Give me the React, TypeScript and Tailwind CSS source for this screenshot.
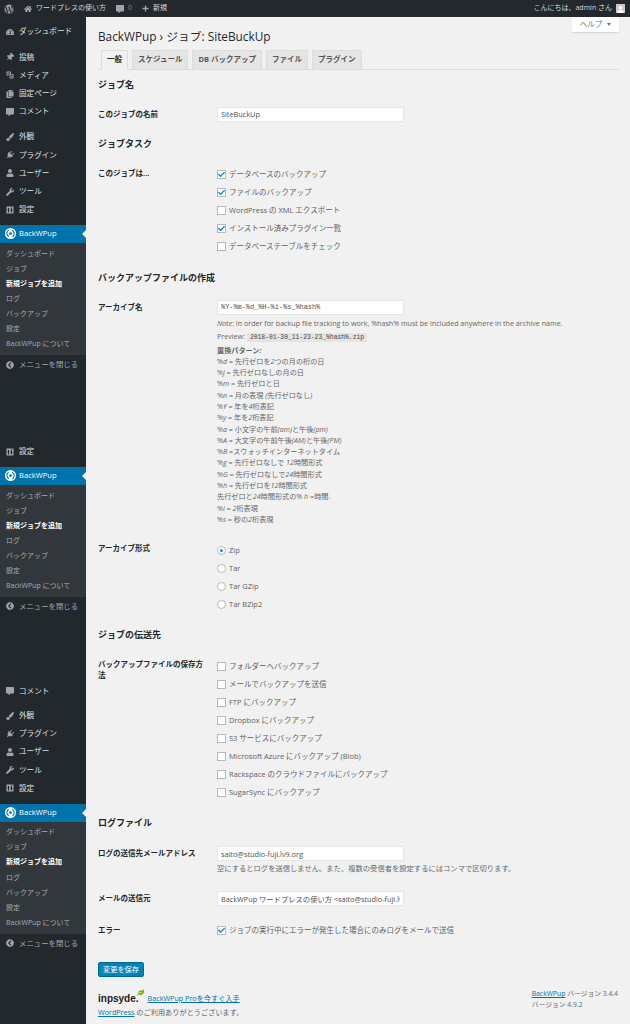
import React from 'react';
import { FaWordpress, FaHome, FaCommentAlt, FaPlus, FaTachometerAlt, FaThumbtack, FaCopy, FaPaintBrush, FaPlug, FaUser, FaWrench, FaChevronCircleLeft, FaCheck, FaLeaf } from 'react-icons/fa';

const font = { fontFamily: '"Open Sans", "Noto Sans CJK JP", sans-serif' };

type IconProps = { className?: string };

const SettingsIcon = ({ className }: IconProps) => (
  <svg viewBox="0 0 16 16" className={className} fill="currentColor">
    <path d="M1 1h14v14H1z M4 4v2H3v2h1v5h2V8h1V6H6V4z M10 3v5H9v2h1v3h2v-3h1V8h-1V3z" fillRule="evenodd" />
  </svg>
);

const MediaIcon = ({ className }: IconProps) => (
  <svg viewBox="0 0 16 16" className={className} fill="currentColor">
    <path d="M1 1h9v8H1z M3 3v4h5V3z" fillRule="evenodd" />
    <circle cx="5.5" cy="5" r="1.2" />
    <path d="M11 6h4v9H7v-4h2v2h4V8h-2z" />
    <circle cx="10.5" cy="11" r="1.3" />
  </svg>
);

const PinIcon = ({ className }: IconProps) => <FaThumbtack className={`${className} rotate-45`} />;
const PluginIcon = ({ className }: IconProps) => <FaPlug className={`${className} rotate-45`} />;

const BackWPupLogo = () => (
  <svg viewBox="0 0 16 16" className="w-[11px] h-[11px] shrink-0">
    <circle cx="8" cy="8" r="8" fill="#fff" />
    <path d="M5.2 3.2 A5.6 5.6 0 0 0 5.6 12.8" fill="none" stroke="#0073aa" strokeWidth="1.6" />
    <path d="M10.8 12.8 A5.6 5.6 0 0 0 10.4 3.2" fill="none" stroke="#0073aa" strokeWidth="1.6" />
    <circle cx="8" cy="8" r="2" fill="#0073aa" />
  </svg>
);

const Item = ({ icon: Icon, label }: { icon: React.ElementType; label: string }) => (
  <div className="flex items-center h-[18.2px] pl-[6px] gap-[5px] text-[7.6px] text-[#dfe1e3]">
    <Icon className="w-[8px] h-[8px] text-[#a0a5aa] shrink-0" />
    <span>{label}</span>
  </div>
);

const BackWPupMenu = () => {
  const subs = ['ダッシュボード', 'ジョブ', '新規ジョブを追加', 'ログ', 'バックアップ', '設定', 'BackWPup について'];
  return (
    <div className="mt-[6px]">
      <div className="relative flex items-center h-[18px] bg-[#0073aa] pl-[5px] gap-[3px] text-[7.6px] text-white">
        <BackWPupLogo />
        <span>BackWPup</span>
        <span className="absolute right-0 top-[5px] border-y-[4px] border-y-transparent border-r-[4px] border-r-[#f1f1f1]" />
      </div>
      <div className="bg-[#32373c] pt-[3.5px] pb-[3px]">
        {subs.map((s) => (
          <div key={s} className={`flex items-center h-[15.1px] pl-[6px] text-[7px] ${s === '新規ジョブを追加' ? 'text-white font-bold' : 'text-[#a8adb2]'}`}>
            {s}
          </div>
        ))}
      </div>
      <div className="flex items-center h-[18px] mt-[0.5px] pl-[6px] gap-[5px] text-[7.4px] text-[#a0a5aa]">
        <FaChevronCircleLeft className="w-[8px] h-[8px]" />
        <span>メニューを閉じる</span>
      </div>
    </div>
  );
};

const Sidebar = () => (
  <aside className="w-[86px] shrink-0 bg-[#23282d] pt-[6px]">
    <Item icon={FaTachometerAlt} label="ダッシュボード" />
    <div className="mt-[7px]">
      <Item icon={PinIcon} label="投稿" />
      <Item icon={MediaIcon} label="メディア" />
      <Item icon={FaCopy} label="固定ページ" />
      <Item icon={FaCommentAlt} label="コメント" />
    </div>
    <div className="mt-[7px]">
      <Item icon={FaPaintBrush} label="外観" />
      <Item icon={PluginIcon} label="プラグイン" />
      <Item icon={FaUser} label="ユーザー" />
      <Item icon={FaWrench} label="ツール" />
      <Item icon={SettingsIcon} label="設定" />
    </div>
    <BackWPupMenu />
    <div className="mt-[69px]">
      <Item icon={SettingsIcon} label="設定" />
    </div>
    <BackWPupMenu />
    <div className="mt-[67px]">
      <Item icon={FaCommentAlt} label="コメント" />
    </div>
    <div className="mt-[6px]">
      <Item icon={FaPaintBrush} label="外観" />
      <Item icon={PluginIcon} label="プラグイン" />
      <Item icon={FaUser} label="ユーザー" />
      <Item icon={FaWrench} label="ツール" />
      <Item icon={SettingsIcon} label="設定" />
    </div>
    <BackWPupMenu />
  </aside>
);

const Check = ({ label, checked }: { label: string; checked?: boolean }) => (
  <div className="flex items-center h-[18px] gap-[3px] text-[7.5px] text-[#5f5f5f]">
    <span className="flex items-center justify-center w-[9px] h-[9px] bg-white border border-[#b4b9be]">
      {checked && <FaCheck className="w-[7px] h-[7px] text-[#1e8cbe]" />}
    </span>
    <span>{label}</span>
  </div>
);

const Radio = ({ label, checked }: { label: string; checked?: boolean }) => (
  <div className="flex items-center h-[18px] gap-[3px] text-[7.5px] text-[#5f5f5f]">
    <span className="flex items-center justify-center w-[9px] h-[9px] rounded-full bg-white border border-[#b4b9be]">
      {checked && <span className="w-[3px] h-[3px] rounded-full bg-[#1e8cbe]" />}
    </span>
    <span>{label}</span>
  </div>
);

const Input = ({ value, mono }: { value: string; mono?: boolean }) => (
  <input
    readOnly
    value={value}
    className={`block w-[187px] h-[15px] px-[3px] bg-white border border-[#e6e6e6] text-[#4a4f54] outline-none ${mono ? 'text-[6.9px] font-mono' : 'text-[7.3px]'}`}
  />
);

const Heading = ({ children, mt }: { children: React.ReactNode; mt: string }) => (
  <h3 className={`text-[9px] leading-[12px] font-bold text-[#23282d] ${mt}`}>{children}</h3>
);

const Row = ({ label, children, mt }: { label: string; children: React.ReactNode; mt: string }) => (
  <div className={`flex ${mt}`}>
    <div className="w-[119px] shrink-0 pr-[9px] pt-[2px] text-[7.5px] leading-[10.5px] font-bold text-[#23282d]">{label}</div>
    <div className="flex-1 min-w-0">{children}</div>
  </div>
);

// latin bits of the pattern help are italic, the japanese stays upright
const Slanted = ({ text }: { text: string }) => (
  <>
    {text.split(/([A-Za-z0-9()]+)/).map((part, i) => (i % 2 === 1 ? <em key={i}>{part}</em> : part))}
  </>
);

const patterns = [
  '%d = 先行ゼロを2つの月の桁の日',
  '%j = 先行ゼロなしの月の日',
  '%m = 先行ゼロと日',
  '%n = 月の表現 (先行ゼロなし)',
  '%Y = 年を4桁表記',
  '%y = 年を2桁表記',
  '%a = 小文字の午前(am)と午後(pm)',
  '%A = 大文字の午前午後(AM)と午後(PM)',
  '%B =スウォッチインターネットタイム',
  '%g = 先行ゼロなしで 12時間形式',
  '%G = 先行ゼロなしで24時間形式',
  '%h = 先行ゼロを12時間形式',
  '先行ゼロと24時間形式の% h =時間.',
  '%i = 2桁表現',
  '%s = 秒の2桁表現',
];

export default function App() {
  const tabs = ['一般', 'スケジュール', 'DB バックアップ', 'ファイル', 'プラグイン'];
  return (
    <div className="w-[630px] h-[1024px] overflow-hidden bg-[#f1f1f1] flex flex-col" style={font}>
      <header className="flex items-center justify-between h-[17px] shrink-0 bg-[#23282d] text-[7px] text-[#d5d8da] pl-[4px] pr-[5px]">
        <div className="flex items-center">
          <FaWordpress className="w-[10px] h-[10px] text-[#a0a5aa]" />
          <FaHome className="w-[8px] h-[8px] ml-[10px] text-[#a0a5aa]" />
          <span className="ml-[4px]">ワードプレスの使い方</span>
          <FaCommentAlt className="w-[8px] h-[8px] ml-[10px] text-[#a0a5aa]" />
          <span className="ml-[4px] text-[#7f8689]">0</span>
          <FaPlus className="w-[7px] h-[7px] ml-[10px] text-[#a0a5aa]" />
          <span className="ml-[4px]">新規</span>
        </div>
        <div className="flex items-center gap-[4px]">
          <span>こんにちは、admin さん</span>
          <span className="flex items-end justify-center w-[9px] h-[9px] bg-[#c9c9c9]">
            <FaUser className="w-[7px] h-[7px] text-white" />
          </span>
        </div>
      </header>
      <div className="flex flex-1 min-h-0">
        <Sidebar />
        <main className="relative flex-1 min-w-0 pl-[12px] pr-[11px]">
          <div className="absolute right-[11px] top-0 flex items-center justify-center gap-[5px] w-[47px] h-[15px] bg-white shadow-[0_1px_1px_rgba(0,0,0,0.1)] text-[7.5px] text-[#72777c]">
            ヘルプ
            <span className="border-x-[2px] border-x-transparent border-t-[3px] border-t-[#72777c]" />
          </div>
          <h1 className="pt-[12px] text-[11.8px] leading-[15px] text-[#23282d]">BackWPup › ジョブ: SiteBuckUp</h1>
          <div className="flex mt-[6px] pl-[3px] gap-[4px] h-[19.5px] border-b border-[#dcdcdc]">
            {tabs.map((t, i) => (
              <div
                key={t}
                className={`flex items-center px-[5px] h-[19.5px] border border-[#dcdcdc] text-[7.5px] font-bold ${i === 0 ? 'bg-[#f1f1f1] border-b-[#f1f1f1] text-[#23282d]' : 'bg-[#e5e5e5] text-[#555]'}`}
              >
                {t}
              </div>
            ))}
          </div>
          <Heading mt="mt-[9px]">ジョブ名</Heading>
          <Row label="このジョブの名前" mt="mt-[16px]">
            <Input value="SiteBuckUp" />
          </Row>
          <Heading mt="mt-[16px]">ジョブタスク</Heading>
          <Row label="このジョブは..." mt="mt-[16px]">
            <div>
              <Check checked label="データベースのバックアップ" />
              <Check checked label="ファイルのバックアップ" />
              <Check label="WordPress の XML エクスポート" />
              <Check checked label="インストール済みプラグイン一覧" />
              <Check label="データベーステーブルをチェック" />
            </div>
          </Row>
          <Heading mt="mt-[16px]">バックアップファイルの作成</Heading>
          <Row label="アーカイブ名" mt="mt-[16px]">
            <Input mono value="%Y-%m-%d_%H-%i-%s_%hash%" />
            <div className="text-[7.15px] text-[#666]">
              <p className="mt-[3px] leading-[11px] whitespace-nowrap">
                <em>Note</em>: In order for backup file tracking to work, %hash% must be included anywhere in the archive name.
              </p>
              <p className="mt-[1px] leading-[12px]">
                Preview: <code className="px-[3px] py-[1px] bg-[#e4e4e4] font-mono text-[6.35px] text-[#444]">2018-01-30_11-23-23_%hash%.zip</code>
              </p>
              <p className="mt-[1px] leading-[11.3px] font-bold">置換パターン<em>:</em></p>
              {patterns.map((p) => (
                <p key={p} className="leading-[11.3px]">
                  <Slanted text={p} />
                </p>
              ))}
            </div>
          </Row>
          <Row label="アーカイブ形式" mt="mt-[16px]">
            <div>
              <Radio checked label="Zip" />
              <Radio label="Tar" />
              <Radio label="Tar GZip" />
              <Radio label="Tar BZip2" />
            </div>
          </Row>
          <Heading mt="mt-[16px]">ジョブの伝送先</Heading>
          <Row label="バックアップファイルの保存方法" mt="mt-[16px]">
            <div>
              <Check label="フォルダーへバックアップ" />
              <Check label="メールでバックアップを送信" />
              <Check label="FTP にバックアップ" />
              <Check label="Dropbox にバックアップ" />
              <Check label="S3 サービスにバックアップ" />
              <Check label="Microsoft Azure にバックアップ (Blob)" />
              <Check label="Rackspace のクラウドファイルにバックアップ" />
              <Check label="SugarSync にバックアップ" />
            </div>
          </Row>
          <Heading mt="mt-[16px]">ログファイル</Heading>
          <Row label="ログの送信先メールアドレス" mt="mt-[17px]">
            <Input value="saito@studio-fuji.lv9.org" />
            <p className="mt-[2px] text-[7.3px] leading-[11px] text-[#666]">空にするとログを送信しません。また、複数の受信者を設定するにはコンマで区切ります。</p>
          </Row>
          <Row label="メールの送信元" mt="mt-[17px]">
            <Input value="BackWPup ワードプレスの使い方 <saito@studio-fuji.lv9.org>" />
          </Row>
          <Row label="エラー" mt="mt-[17px]">
            <div className="-mt-[2px]">
              <Check checked label="ジョブの実行中にエラーが発生した場合にのみログをメールで送信" />
            </div>
          </Row>
          <button className="block mt-[23px] w-[46px] h-[15px] bg-[#0085ba] border border-[#006799] rounded-[2px] text-[7.2px] text-white">
            変更を保存
          </button>
          <div className="flex justify-between mt-[13px] text-[7.2px] text-[#666]">
            <div>
              <div className="flex items-center h-[16px]">
                <span className="relative text-[10px] font-bold text-[#222]" style={{ fontFamily: '"Liberation Sans", sans-serif' }}>
                  inpsyde.
                  <FaLeaf className="absolute -right-[5px] -top-[2px] w-[7px] h-[7px] text-[#7ab800]" />
                </span>
                <a className="ml-[9px] underline text-[#0073aa]">BackWPup Proを今すぐ入手</a>
              </div>
              <p className="mt-[1px]">
                <a className="underline text-[#0073aa]">WordPress</a> のご利用ありがとうございます。
              </p>
            </div>
            <div className="-mt-[1px] pr-[1px] text-[6.8px]">
              <p><a className="underline text-[#0073aa]">BackWPup</a> バージョン 3.4.4</p>
              <p className="mt-[1px]">バージョン 4.9.2</p>
            </div>
          </div>
        </main>
      </div>
    </div>
  );
}
